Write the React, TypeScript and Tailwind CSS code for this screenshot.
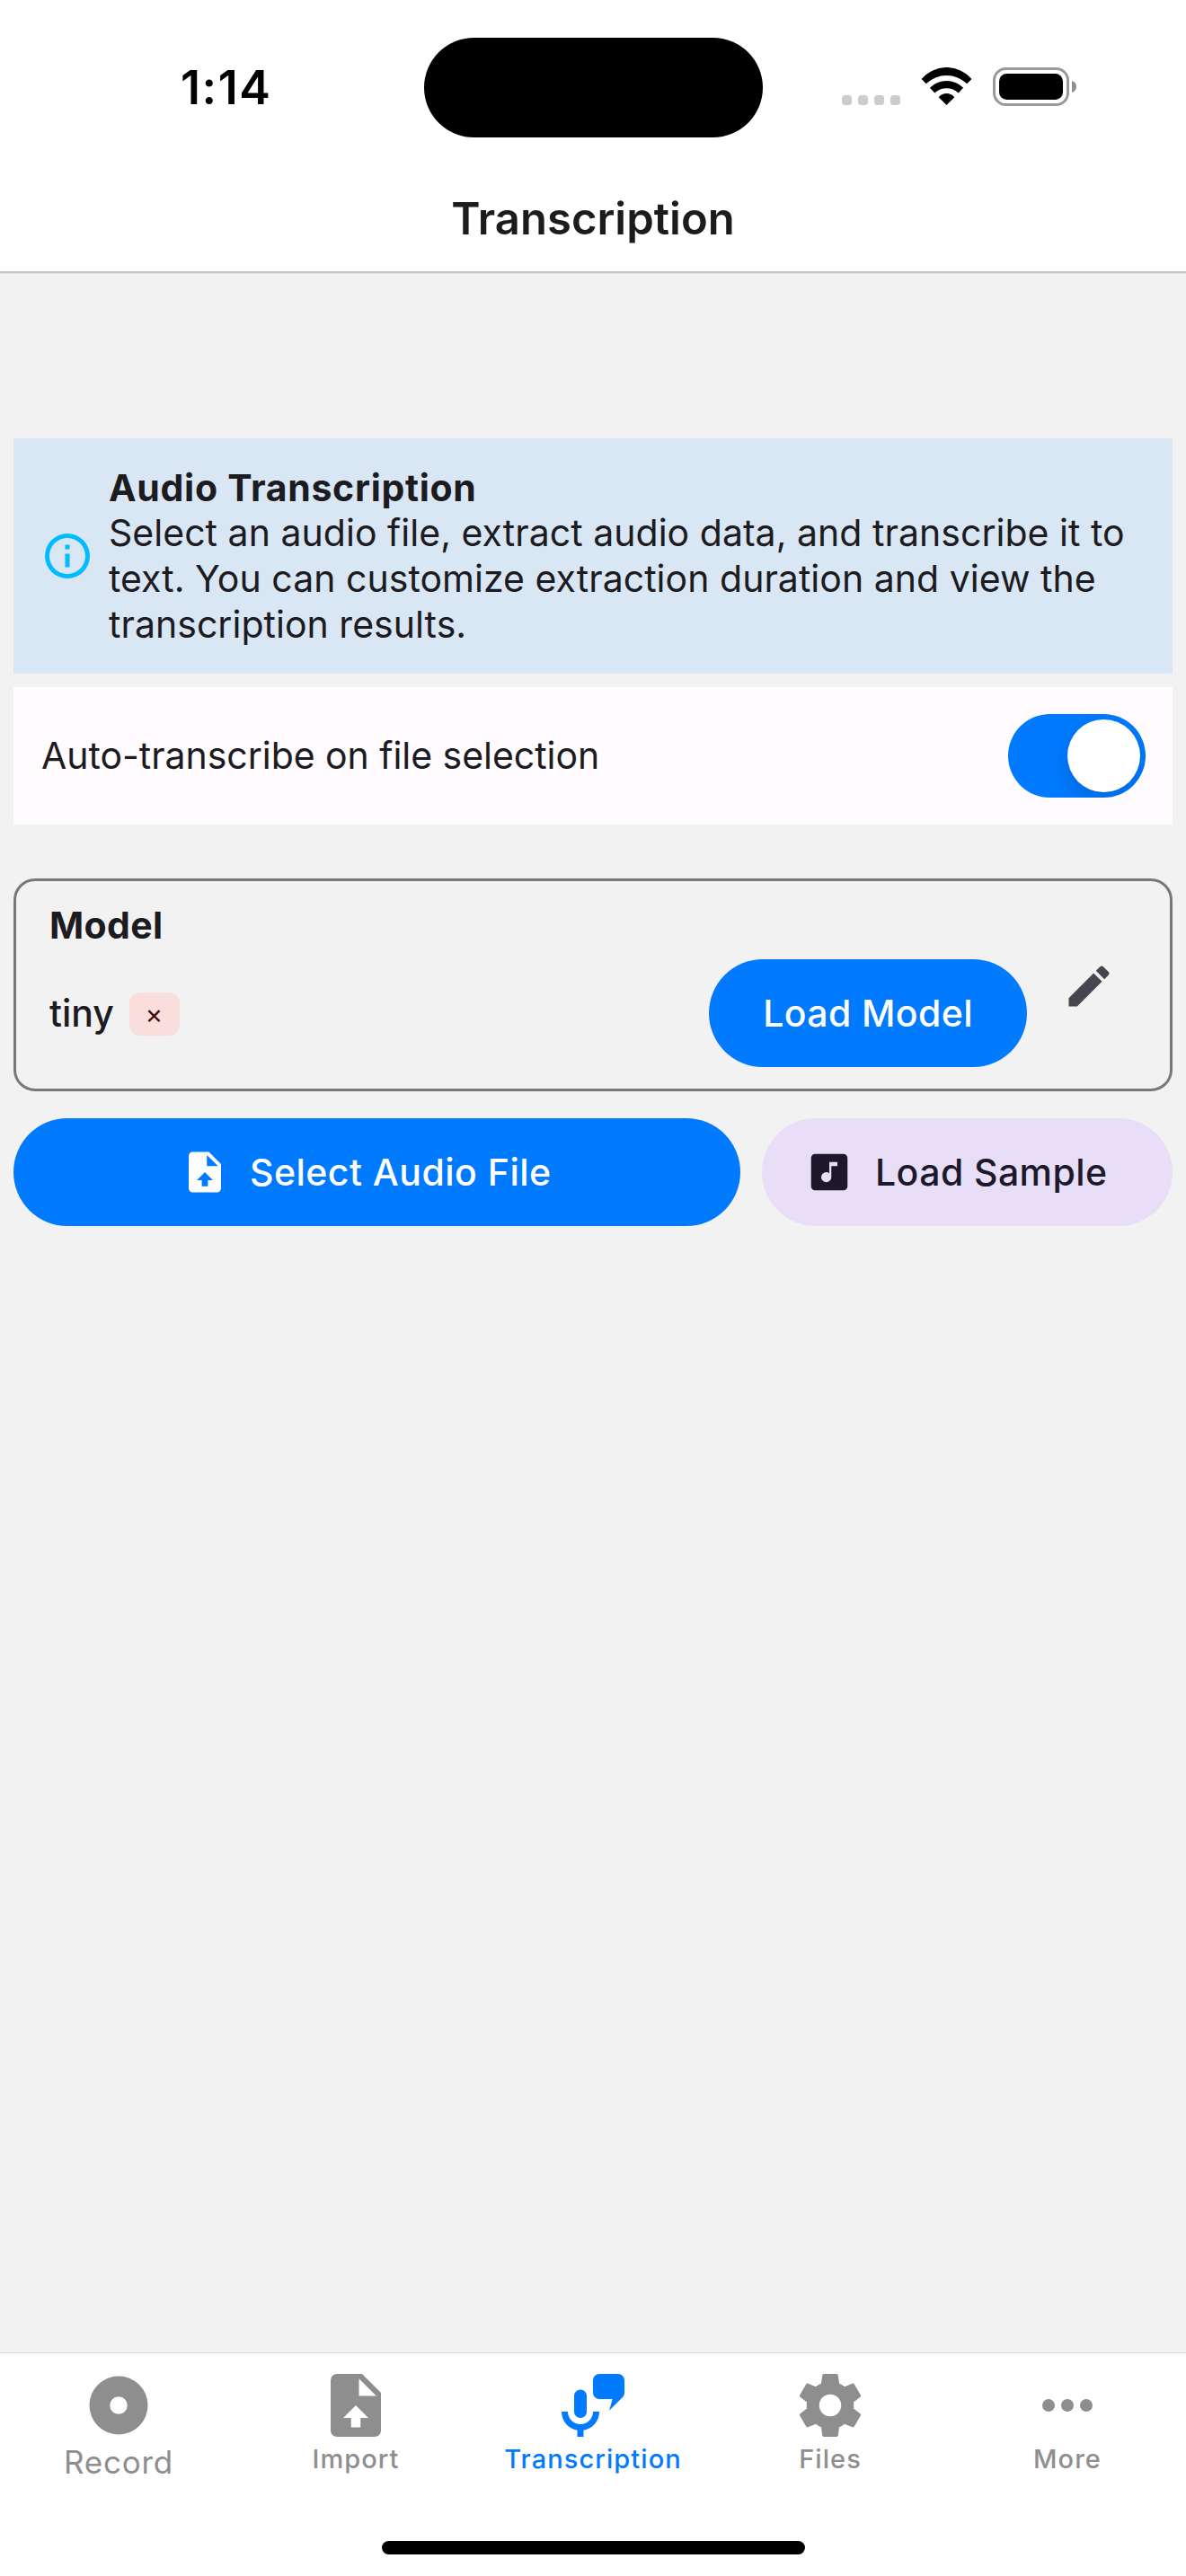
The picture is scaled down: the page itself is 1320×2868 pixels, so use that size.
import type { ReactNode } from "react";

const PATHS = {
  info: "M11,9H13V7H11M12,20C7.59,20 4,16.41 4,12C4,7.59 7.59,4 12,4C16.41,4 20,7.59 20,12C20,16.41 16.41,20 12,20M12,2A10,10 0 0,0 2,12A10,10 0 0,0 12,22A10,10 0 0,0 22,12A10,10 0 0,0 12,2M11,17H13V11H11V17Z",
  pencil:
    "M20.71,7.04C21.1,6.65 21.1,6 20.71,5.63L18.37,3.29C18,2.9 17.35,2.9 16.96,3.29L15.12,5.12L18.87,8.87M3,17.25V21H6.75L17.81,9.93L14.06,6.18L3,17.25Z",
  fileUpload:
    "M14,2H6A2,2 0 0,0 4,4V20A2,2 0 0,0 6,22H18A2,2 0 0,0 20,20V8L14,2M13.5,16V19H10.5V16H8L12,12L16,16H13.5M13,9V3.5L18.5,9H13Z",
  musicBox:
    "M16,9H13V14.5A2.5,2.5 0 0,1 10.5,17A2.5,2.5 0 0,1 8,14.5A2.5,2.5 0 0,1 10.5,12C11.07,12 11.58,12.19 12,12.5V7H16M19,3H5A2,2 0 0,0 3,5V19A2,2 0 0,0 5,21H19A2,2 0 0,0 21,19V5A2,2 0 0,0 19,3Z",
  record:
    "M12,2A10,10 0 0,0 2,12A10,10 0 0,0 12,22A10,10 0 0,0 22,12A10,10 0 0,0 12,2M12,9A3,3 0 0,1 15,12A3,3 0 0,1 12,15A3,3 0 0,1 9,12A3,3 0 0,1 12,9Z",
  speech:
    "M8,7A2,2 0 0,1 10,9V14A2,2 0 0,1 8,16A2,2 0 0,1 6,14V9A2,2 0 0,1 8,7M14,14C14,16.97 11.84,19.44 9,19.92V22H7V19.92C4.16,19.44 2,16.97 2,14H4A4,4 0 0,0 8,18A4,4 0 0,0 12,14H14M21.41,9.41L17.17,13.66L18.18,10H14A2,2 0 0,1 12,8V4A2,2 0 0,1 14,2H20A2,2 0 0,1 22,4V8C22,8.55 21.78,9.05 21.41,9.41Z",
  cog: "M12,15.5A3.5,3.5 0 0,1 8.5,12A3.5,3.5 0 0,1 12,8.5A3.5,3.5 0 0,1 15.5,12A3.5,3.5 0 0,1 12,15.5M19.43,12.97C19.47,12.65 19.5,12.33 19.5,12C19.5,11.67 19.47,11.34 19.43,11L21.54,9.37C21.73,9.22 21.78,8.95 21.66,8.73L19.66,5.27C19.54,5.05 19.27,4.96 19.05,5.05L16.56,6.05C16.04,5.66 15.5,5.32 14.87,5.07L14.5,2.42C14.46,2.18 14.25,2 14,2H10C9.75,2 9.54,2.18 9.5,2.42L9.13,5.07C8.5,5.32 7.96,5.66 7.44,6.05L4.95,5.05C4.73,4.96 4.46,5.05 4.34,5.27L2.34,8.73C2.21,8.95 2.27,9.22 2.46,9.37L4.57,11C4.53,11.34 4.5,11.67 4.5,12C4.5,12.33 4.53,12.65 4.57,12.97L2.46,14.63C2.27,14.78 2.21,15.05 2.34,15.27L4.34,18.73C4.46,18.95 4.73,19.03 4.95,18.95L7.44,17.94C7.96,18.34 8.5,18.68 9.13,18.93L9.5,21.58C9.54,21.82 9.75,22 10,22H14C14.25,22 14.46,21.82 14.5,21.58L14.87,18.93C15.5,18.67 16.04,18.34 16.56,17.94L19.05,18.95C19.27,19.03 19.54,18.95 19.66,18.73L21.66,15.27C21.78,15.05 21.73,14.78 21.54,14.63L19.43,12.97Z",
  dots: "M16,12A2,2 0 0,1 18,10A2,2 0 0,1 20,12A2,2 0 0,1 18,14A2,2 0 0,1 16,12M10,12A2,2 0 0,1 12,10A2,2 0 0,1 14,12A2,2 0 0,1 12,14A2,2 0 0,1 10,12M4,12A2,2 0 0,1 6,10A2,2 0 0,1 8,12A2,2 0 0,1 6,14A2,2 0 0,1 4,12Z",
};

function Icon({ name, className }: { name: keyof typeof PATHS; className: string }) {
  return (
    <svg viewBox="0 0 24 24" fill="currentColor" className={`shrink-0 ${className}`}>
      <path d={PATHS[name]} />
    </svg>
  );
}

function StatusBar() {
  return (
    <div className="flex h-[194px] items-center">
      <div className="w-[471.5px] pt-[2px] pl-[201px] text-[52px] leading-[64px] font-semibold tracking-[1.6px] text-black">
        1:14
      </div>
      <div className="h-[111px] w-[377px] rounded-full bg-black" />
      <div className="flex items-end pb-px pl-[88.5px]">
        <div className="flex gap-[7px] pb-px">
          <span className="size-[11px] rounded-[3.5px] bg-[#cccccc]" />
          <span className="size-[11px] rounded-[3.5px] bg-[#cccccc]" />
          <span className="size-[11px] rounded-[3.5px] bg-[#cccccc]" />
          <span className="size-[11px] rounded-[3.5px] bg-[#cccccc]" />
        </div>
        <svg viewBox="0 0 57 43" className="ml-[23px] h-[43px] w-[57px]">
          <path d="M.6 13A36.4 36.4 0 0 1 56.4 13L51.3 18.2A33 33 0 0 0 5.7 18.2Z" />
          <path d="M9.9 22.7A26.6 26.6 0 0 1 47.1 22.7L41.7 28.5A19.3 19.3 0 0 0 15.3 28.5Z" />
          <path d="M19.7 33.3A11.2 11.2 0 0 1 37.3 33.3L28.5 42Z" />
        </svg>
        <svg viewBox="0 0 94 43" className="ml-[23px] h-[43px] w-[94px]">
          <rect x="1.5" y="1.5" width="82" height="40" rx="13" fill="none" stroke="#999999" strokeWidth="3" />
          <rect x="7" y="7" width="71" height="29" rx="8.5" />
          <path d="M88 15C91.5 16 93 18.500 93 21.500C93 24.500 91.500 27 88 28Z" fill="#8f8f8f" />
        </svg>
      </div>
    </div>
  );
}

function Toggle() {
  return (
    <div className="flex h-[93px] w-[153px] items-center justify-end overflow-hidden rounded-full bg-[#007aff] pr-[6px]">
      <span className="size-[81px] rounded-full bg-white shadow-[0_9px_24px_rgba(0,0,0,0.15)]" />
    </div>
  );
}

function Tab({ icon, children, active = false }: { icon: keyof typeof PATHS; children: ReactNode; active?: boolean }) {
  return (
    <div className={`flex flex-1 flex-col items-center ${active ? "text-[#007aff]" : "text-[#8e8e8f]"}`}>
      <Icon name={icon} className="size-[84px]" />
      <span className="text-[29px] leading-[36px] font-medium tracking-[1.07px]">{children}</span>
    </div>
  );
}

export default function App() {
  return (
    <div className="flex h-[2868px] w-[1320px] flex-col overflow-hidden bg-[#f2f2f2] font-['Inter',sans-serif] text-[#1c1b1f]">
      <header className="h-[303px] shrink-0 border-b border-[#c2c2c2] bg-white shadow-[0_1px_0_#c8c8c8,0_2px_0_#e2e2e2]">
        <StatusBar />
        <h1 className="mt-5 text-center text-[49px] leading-[60px] font-semibold text-[#1c1c1e]">Transcription</h1>
      </header>

      <main className="flex flex-1 flex-col px-[15px] pt-[185px] text-[41px] leading-[51px]">
        <section className="flex h-[262px] items-center gap-[15px] bg-[#d9e6f4] pl-[30px] leading-[50.75px]">
          <Icon name="info" className="size-[60px] text-[#00bbff]" />
          <div className="pl-[1px]">
            <h2 className="font-bold tracking-[0.7px]">Audio Transcription</h2>
            <p className="tracking-[0.03px]">
              Select an audio file, extract audio data, and transcribe it to
              <br />
              text. You can customize extraction duration and view the
              <br />
              transcription results.
            </p>
          </div>
        </section>

        <section className="mt-[15px] flex h-[153px] items-center justify-between bg-[#fffbff] pr-[30px] pl-[31px]">
          <span className="tracking-[-0.04px]">Auto-transcribe on file selection</span>
          <Toggle />
        </section>

        <section className="mt-[60px] flex h-[237px] items-center rounded-[24px] border-[3px] border-[#7c757e] pr-[60px] pl-[37px]">
          <div className="flex-1">
            <h2 className="font-bold tracking-[0.35px]">Model</h2>
            <div className="mt-3 flex items-center">
              <span className="w-[89px] font-medium">tiny</span>
              <span className="mt-[2px] flex h-[48px] w-[56px] items-center justify-center rounded-[12px] bg-[#fadedc] pr-px text-[30px] leading-[48px] text-[#410e0b]">
                ×
              </span>
              <button className="ml-auto h-[120px] w-[354px] rounded-full bg-[#007aff] font-medium tracking-[0.39px] text-white">
                Load Model
              </button>
            </div>
          </div>
          <Icon name="pencil" className="mt-[2px] ml-[39px] size-[60px] text-[#49454f]" />
        </section>

        <div className="mt-[30px] flex gap-[24px] font-medium">
          <button className="flex h-[120px] w-[809px] items-center gap-[23px] rounded-full bg-[#007aff] pl-[186px] tracking-[0.47px] text-white">
            <Icon name="fileUpload" className="size-[54px]" />
            Select Audio File
          </button>
          <button className="flex h-[120px] w-[457px] items-center gap-[24px] rounded-full bg-[#e8def8] pl-[48px] tracking-[0.42px] text-[#1d192b]">
            <Icon name="musicBox" className="size-[54px]" />
            Load Sample
          </button>
        </div>
      </main>

      <footer className="flex h-[249px] shrink-0 flex-col items-center justify-between border-t border-[#d8d8d8] bg-white pt-[15.5px] pb-[24px]">
        <nav className="flex w-full">
          <div className="flex flex-1 flex-col items-center text-[#8e8e8f]">
            <Icon name="record" className="m-[3px] size-[78px]" />
            <span className="text-[35px] leading-[42px] tracking-[0.8px]">Record</span>
          </div>
          <Tab icon="fileUpload">Import</Tab>
          <Tab icon="speech" active>
            Transcription
          </Tab>
          <Tab icon="cog">Files</Tab>
          <Tab icon="dots">More</Tab>
        </nav>
        <div className="h-[15px] w-[471px] rounded-full bg-black" />
      </footer>
    </div>
  );
}
